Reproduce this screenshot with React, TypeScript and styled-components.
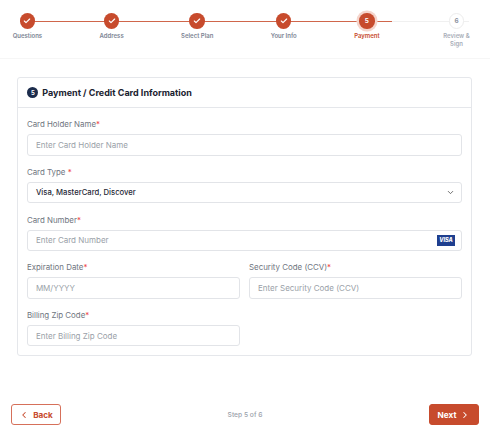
import React from 'react'
import styled, { createGlobalStyle } from 'styled-components'
import { Check, ChevronDown, ChevronLeft, ChevronRight } from 'lucide-react'

const accent = '#c74b2d'

const steps = [
    { label: 'Questions', state: 'done' },
    { label: 'Address', state: 'done' },
    { label: 'Select Plan', state: 'done' },
    { label: 'Your Info', state: 'done' },
    { label: 'Payment', state: 'active' },
    { label: 'Review & Sign', state: 'todo' },
]

function App() {
    return (
        <Page>
            <GlobalStyle />
            <Stepper>
                <TrackLine />
                <TrackProgress />
                {steps.map((step, index) => (
                    <Step key={step.label} $wide={step.state === 'todo'}>
                        <Circle $state={step.state}>
                            {step.state === 'done'
                                ? <Check size={8} strokeWidth={3.5} />
                                : index + 1}
                        </Circle>
                        <StepLabel $state={step.state}>{step.label}</StepLabel>
                    </Step>
                ))}
            </Stepper>
            <Main>
                <Card>
                    <CardHeader>
                        <NumberBadge>5</NumberBadge>
                        <CardTitle>Payment / Credit Card Information</CardTitle>
                    </CardHeader>
                    <CardBody>
                        <Field>
                            <Label>Card Holder Name<Required>*</Required></Label>
                            <Input placeholder="Enter Card Holder Name" />
                        </Field>
                        <Field>
                            <Label>Card Type <Required>*</Required></Label>
                            <SelectBox>
                                Visa, MasterCard, Discover
                                <ChevronDown size={9} strokeWidth={2.2} color="#555" />
                            </SelectBox>
                        </Field>
                        <Field>
                            <Label>Card Number<Required>*</Required></Label>
                            <InputWrap>
                                <Input placeholder="Enter Card Number" />
                                <VisaBadge>VISA</VisaBadge>
                            </InputWrap>
                        </Field>
                        <Row>
                            <Field>
                                <Label>Expiration Date<Required>*</Required></Label>
                                <Input placeholder="MM/YYYY" />
                            </Field>
                            <Field>
                                <Label>Security Code (CCV)<Required>*</Required></Label>
                                <Input placeholder="Enter Security Code (CCV)" />
                            </Field>
                        </Row>
                        <Row>
                            <Field>
                                <Label>Billing Zip Code<Required>*</Required></Label>
                                <Input placeholder="Enter Billing Zip Code" />
                            </Field>
                            <div />
                        </Row>
                    </CardBody>
                </Card>
            </Main>
            <Footer>
                <BackButton>
                    <ChevronLeft size={10} strokeWidth={2.5} />
                    Back
                </BackButton>
                <StepCount>Step 5 of 6</StepCount>
                <NextButton>
                    Next
                    <ChevronRight size={10} strokeWidth={2.5} />
                </NextButton>
            </Footer>
        </Page>
    )
}

const GlobalStyle = createGlobalStyle`
    html, body {
        margin: 0;
        background: #fff;
    }
    * {
        box-sizing: border-box;
    }
`

const Page = styled.div`
    width: 490px;
    height: 431px;
    display: flex;
    flex-direction: column;
    font-family: Inter, "Open Sans", sans-serif;
    color: #1c2434;
    overflow: hidden;
`

const Stepper = styled.div`
    position: relative;
    height: 59px;
    padding: 13.3px 14px 0 12.7px;
    display: flex;
    justify-content: space-between;
    align-items: flex-start;
    border-bottom: 1px solid #f6f6f6;
`

const TrackLine = styled.div`
    position: absolute;
    left: 28px;
    top: 20.6px;
    width: 441px;
    height: 1px;
    background: #f0f0f0;
`

const TrackProgress = styled.div`
    position: absolute;
    left: 28px;
    top: 20.6px;
    width: 364px;
    height: 1px;
    background: #d0664b;
`

const Step = styled.div<{ $wide?: boolean }>`
    position: relative;
    display: flex;
    flex-direction: column;
    align-items: center;
    gap: 3.3px;
    width: ${(p) => (p.$wide ? '39px' : 'auto')};
`

const Circle = styled.div<{ $state: string }>`
    width: 15.4px;
    height: 15.4px;
    border-radius: 50%;
    display: flex;
    align-items: center;
    justify-content: center;
    font-size: 6.4px;
    font-weight: 700;
    color: ${(p) => (p.$state === 'todo' ? '#8d93a0' : '#fff')};
    background: ${(p) => (p.$state === 'todo' ? '#fff' : accent)};
    border: ${(p) => (p.$state === 'todo' ? '1px solid #ececec' : 'none')};
    box-shadow: ${(p) => (p.$state === 'active' ? '0 0 0 2.5px #f5d5cc' : 'none')};
`

const StepLabel = styled.div<{ $state: string }>`
    font-size: 6px;
    line-height: 7.7px;
    font-weight: 600;
    text-align: center;
    white-space: ${(p) => (p.$state === 'todo' ? 'normal' : 'nowrap')};
    max-width: ${(p) => (p.$state === 'todo' ? '28px' : 'none')};
    color: ${(p) => (p.$state === 'active' ? accent : p.$state === 'todo' ? '#a9aeb8' : '#7d8594')};
`

const Main = styled.div`
    padding: 18.3px 18.3px 0 17.3px;
    flex: 1;
`

const Card = styled.div`
    height: 279px;
    border: 1px solid #e5e7eb;
    border-radius: 3px;
    background: #fff;
`

const CardHeader = styled.div`
    height: 30px;
    padding: 0 9px;
    display: flex;
    align-items: center;
    gap: 4px;
    border-bottom: 1px solid #e5e7eb;
`

const NumberBadge = styled.div`
    width: 11px;
    height: 11px;
    border-radius: 50%;
    background: #1c2c4c;
    color: #fff;
    font-size: 6px;
    font-weight: 700;
    display: flex;
    align-items: center;
    justify-content: center;
`

const CardTitle = styled.div`
    font-size: 9px;
    font-weight: 700;
    color: #1a2230;
`

const CardBody = styled.div`
    padding: 10px 8.6px 0;
    display: flex;
    flex-direction: column;
    gap: 10.4px;
`

const Row = styled.div`
    display: grid;
    grid-template-columns: 1fr 1fr;
    gap: 9px;
`

const Field = styled.div`
    display: flex;
    flex-direction: column;
    gap: 4px;
    min-width: 0;
`

const Label = styled.div`
    font-size: 7.9px;
    line-height: 12px;
    color: #6f7580;
`

const Required = styled.span`
    color: #ef4444;
`

const InputWrap = styled.div`
    position: relative;
`

const Input = styled.input`
    display: block;
    width: 100%;
    height: 21.3px;
    padding: 0 8px;
    border: 1px solid #e2e4e8;
    border-radius: 3px;
    background: #fff;
    font-family: inherit;
    font-size: 8px;
    outline: none;
    &::placeholder {
        color: #9a9fa8;
        opacity: 1;
    }
`

const SelectBox = styled.div`
    height: 21.3px;
    padding: 0 6px 0 8px;
    border: 1px solid #e2e4e8;
    border-radius: 3px;
    display: flex;
    align-items: center;
    justify-content: space-between;
    font-size: 7.7px;
    font-weight: 500;
    color: #1f2937;
`

const VisaBadge = styled.div`
    position: absolute;
    right: 7.3px;
    top: 5px;
    width: 17.5px;
    height: 11.5px;
    background: #1f3f8f;
    color: #fff;
    font-size: 5.5px;
    font-style: italic;
    font-weight: 800;
    display: flex;
    align-items: center;
    justify-content: center;
`

const Footer = styled.div`
    height: 27px;
    padding: 0 11px 6px;
    display: flex;
    align-items: center;
    justify-content: space-between;
`

const BackButton = styled.button`
    width: 50px;
    height: 21px;
    display: flex;
    align-items: center;
    justify-content: center;
    gap: 4px;
    padding: 0;
    border: 1px solid #d6705a;
    border-radius: 3px;
    background: #fff;
    color: ${accent};
    font-family: inherit;
    font-size: 8.2px;
    font-weight: 700;
`

const NextButton = styled(BackButton)`
    border-color: ${accent};
    background: ${accent};
    color: #fff;
`

const StepCount = styled.div`
    font-size: 6.7px;
    font-weight: 500;
    color: #9aa0aa;
`

export default App
